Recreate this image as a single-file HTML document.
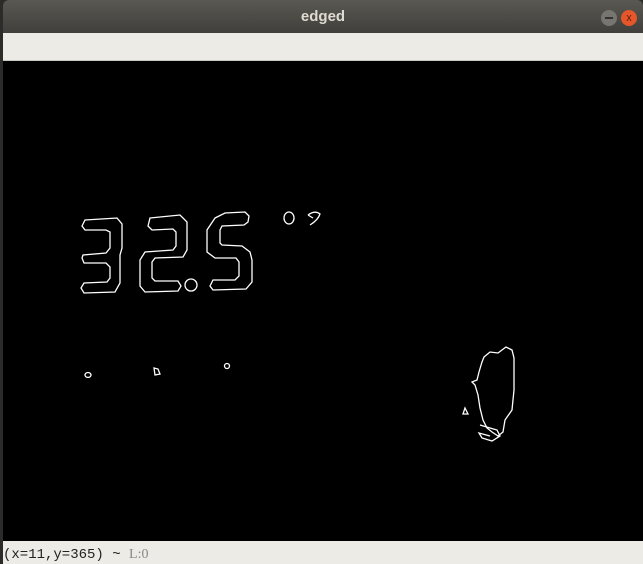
<!DOCTYPE html>
<html><head><style>
body{margin:0;width:643px;height:564px;overflow:hidden;background:#2b2b29;font-family:"Liberation Sans",sans-serif;position:relative}
#tb{position:absolute;left:3px;top:0;width:640px;height:33px;background:linear-gradient(#5a5852,#403f3b);border-radius:6px 6px 0 0}
#title{position:absolute;left:0;right:0;top:8px;text-align:center;color:#dfdbd2;font-weight:bold;font-size:15px}
.btn{position:absolute;top:10px;width:16px;height:16px;border-radius:50%}
#tool{position:absolute;left:3px;top:33px;width:640px;height:27px;background:#edebe6;border-bottom:1px solid #c8c6c0}
#img{position:absolute;left:3px;top:61px;width:640px;height:480px;background:#000}
#st{position:absolute;left:3px;top:541px;width:640px;height:23px;background:#edebe6;font-family:"Liberation Mono",monospace;font-size:14px;color:#222;line-height:27px;overflow:hidden;white-space:nowrap}
</style></head><body>
<div id="tb"><div id="title">edged</div>
<div class="btn" style="left:598px;background:#77756f"><div style="position:absolute;left:4px;top:7px;width:8px;height:2px;background:#333"></div></div>
<div class="btn" style="left:618px;background:#e5562a"><div style="position:absolute;left:0;right:0;top:0;text-align:center;font-size:11px;color:#602010;line-height:16px">x</div></div>
</div>
<div id="tool"></div>
<div id="img"></div>
<svg style="position:absolute;left:0;top:0" width="643" height="564" fill="none" stroke="#fff" stroke-width="1.3">
<path d="M85,220 L117,218 L122,224 L122,248 L120,255 L120,283 L115,292 L84,293 L81,288 L84,283 L107,282 L110,278 L110,267 L106,263 L84,263 L82,258 L83,255 L106,253 L110,248 L110,232 L106,230 L85,230 L82,226 Z"/>
<path d="M150,218 L180,215 L187,222 L187,250 L183,257 L155,258 L152,262 L152,278 L155,281 L178,281 L181,286 L178,291 L145,292 L140,286 L140,260 L145,252 L173,250 L176,246 L176,232 L173,229 L152,230 L148,226 Z"/>
<circle cx="191" cy="285" r="6"/>
<path d="M215,218 L225,213 L245,212 L249,216 L248,222 L244,225 L222,226 L220,230 L220,243 L222,245 L242,246 L250,252 L252,260 L252,282 L246,289 L213,290 L210,286 L213,280 L235,280 L239,276 L239,262 L236,258 L215,258 L207,252 L207,230 Z"/>
<ellipse cx="289" cy="218" rx="5" ry="6"/>
<path d="M308,215 Q315,210 320,214 Q318,220 310,225 M308,215 L313,218"/>
<ellipse cx="88" cy="375" rx="3" ry="2.5"/>
<path d="M154,368 L158,369 L160,374 L155,375 Z"/>
<circle cx="227" cy="366" r="2.5"/>
<path d="M484,357 L490,352 L498,353 L506,347 L512,350 L514,358 L514,390 L512,410 L505,420 L503,432 L498,436 L492,432 L487,428 L483,420 L480,408 L478,395 L475,385 L472,382 L477,380 L479,372 L482,362 Z"/>
<path d="M480,425 L490,428 L497,430 L500,436 L492,441 L482,438 L479,433 L490,436"/>
<path d="M465,408 L468,414 L463,414 Z"/>
</svg>
<div id="st">(x=11,y=365) ~ <span style="color:#888;font-family:'Liberation Serif',serif">L:0</span></div>
</body></html>
